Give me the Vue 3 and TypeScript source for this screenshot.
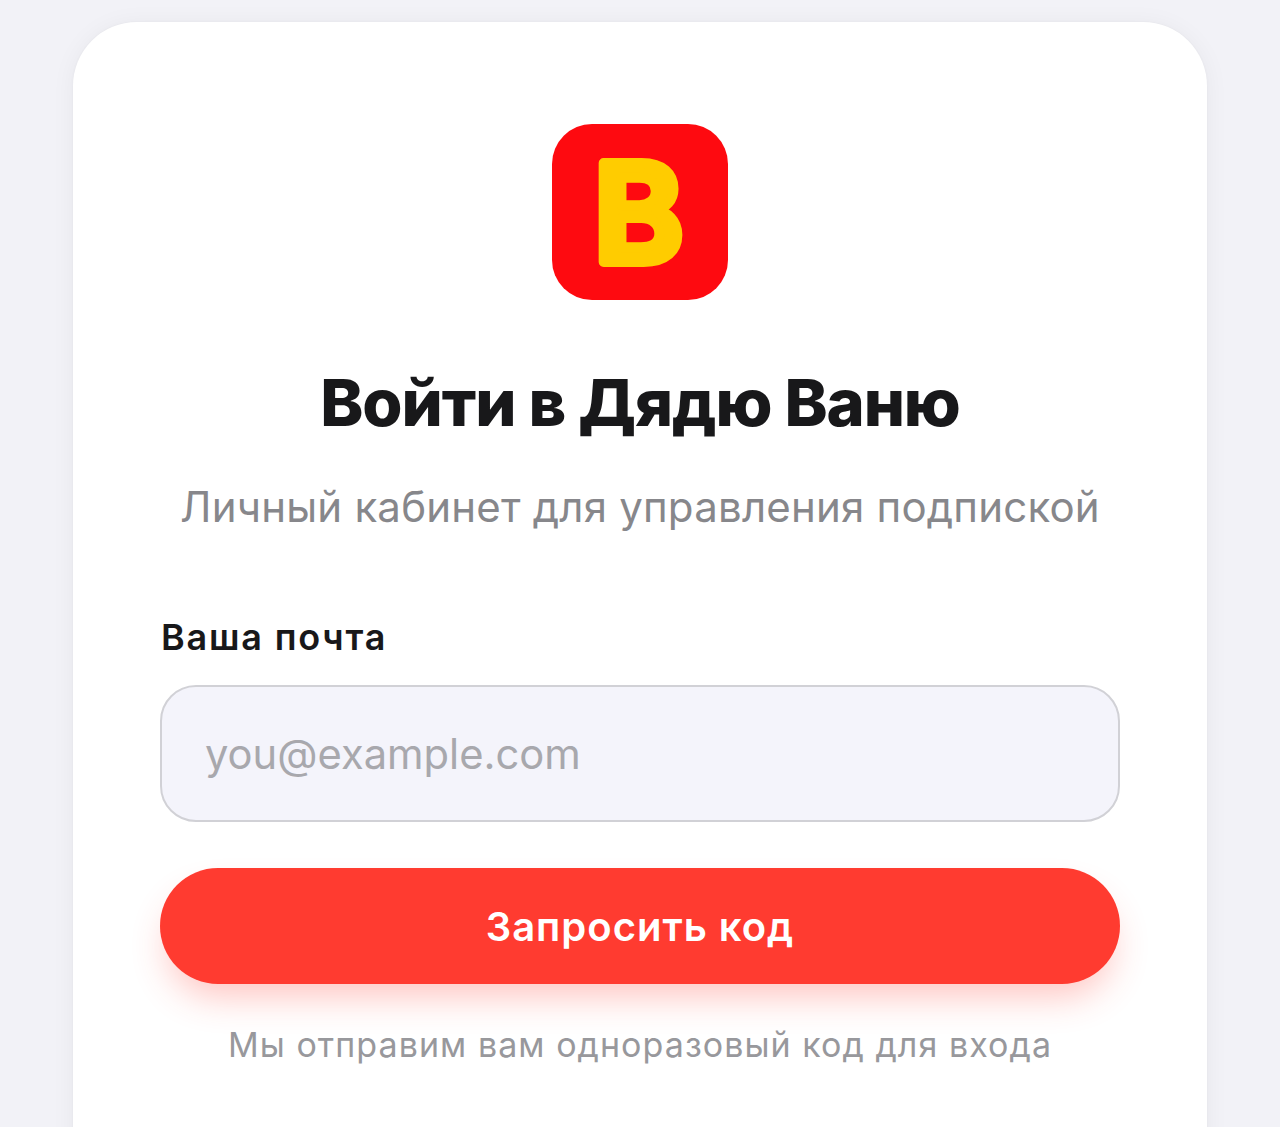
<template>
  <main class="page">
    <section class="card">
      <svg class="logo" viewBox="0 0 176 176" role="img" aria-label="Дядя Ваня">
        <rect width="176" height="176" rx="40" fill="#fe0a10" />
        <text x="86.5" y="138" text-anchor="middle" class="logo-letter">B</text>
      </svg>

      <h1 class="title">Войти в Дядю Ваню</h1>
      <p class="subtitle">Личный кабинет для управления подпиской</p>

      <form class="form" @submit.prevent>
        <label class="label" for="email">Ваша почта</label>
        <input id="email" v-model="email" class="input" type="email" placeholder="you@example.com" />
        <button class="submit" type="submit">Запросить код</button>
      </form>

      <p class="hint">Мы отправим вам одноразовый код для входа</p>
    </section>
  </main>
</template>

<script setup lang="ts">
import { ref } from 'vue'

const email = ref('')
</script>

<style>
html,
body {
  margin: 0;
  background: #f2f2f7;
}
</style>

<style scoped>
.page {
  height: 1127px;
  overflow: hidden;
  box-sizing: border-box;
  padding: 22px 73px 0;
  font-family: Inter, 'Liberation Sans', sans-serif;
}

.card {
  height: 1300px;
  box-sizing: border-box;
  padding: 102px 87px 0;
  display: flex;
  flex-direction: column;
  align-items: center;
  background: #fff;
  border-radius: 64px;
  box-shadow: 0 0 3px rgba(0, 0, 0, 0.04), 0 2px 24px rgba(0, 0, 0, 0.05);
}

.logo {
  display: block;
  width: 176px;
  height: 176px;
  flex-shrink: 0;
}

.logo-letter {
  font-family: Inter, sans-serif;
  font-size: 136px;
  font-weight: 600;
  fill: #ffcc00;
  stroke: #ffcc00;
  stroke-width: 10px;
  stroke-linejoin: round;
}

.title {
  margin: 66px 0 0;
  font-size: 65px;
  line-height: 74px;
  font-weight: 800;
  letter-spacing: -1.1px;
  color: #18181a;
}

.subtitle {
  margin: 42px 0 0;
  font-size: 42px;
  line-height: 50px;
  font-weight: 400;
  letter-spacing: 0.2px;
  color: #87878b;
}

.form {
  align-self: stretch;
  margin-top: 83px;
  display: flex;
  flex-direction: column;
}

.label {
  font-size: 36px;
  line-height: 44px;
  font-weight: 600;
  letter-spacing: 1.8px;
  padding-left: 1px;
  color: #18181a;
}

.input {
  margin-top: 26px;
  height: 137px;
  box-sizing: border-box;
  padding: 0 43px;
  font: 400 41.7px Inter, sans-serif;
  color: #18181a;
  background: #f4f4fb;
  border: 2px solid #d1d1d6;
  border-radius: 36px;
  outline: none;
}

.input::placeholder {
  color: #a8a8ad;
  opacity: 1;
}

.submit {
  margin-top: 46px;
  height: 116px;
  padding: 0;
  border: none;
  border-radius: 58px;
  font: 600 40px Inter, sans-serif;
  letter-spacing: 1px;
  color: #fff;
  background: #ff3b30;
  box-shadow: 0 20px 36px -8px rgba(255, 59, 48, 0.3);
}

.hint {
  margin: 39px 0 0;
  font-size: 34px;
  line-height: 44px;
  letter-spacing: 1.05px;
  color: #98989c;
}
</style>
